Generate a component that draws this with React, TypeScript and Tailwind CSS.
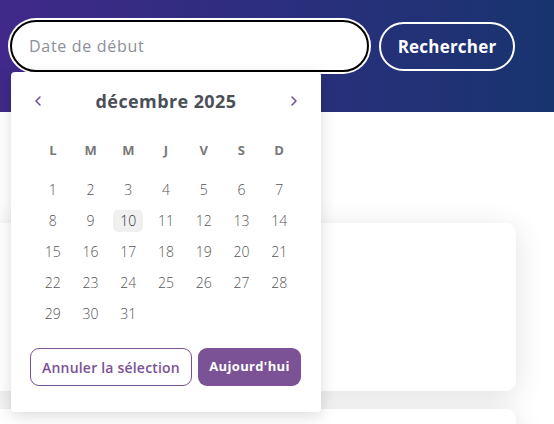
import { ChevronLeft, ChevronRight } from 'lucide-react'

const weekDays = ['L', 'M', 'M', 'J', 'V', 'S', 'D']
const days = Array.from({ length: 31 }, (_, i) => i + 1)

function DatePicker() {
  return (
    <div className="absolute left-[11px] top-[72px] z-10 w-[310px] rounded-[4px] bg-white pb-[26px] pt-[18px] shadow-[0_4px_16px_rgba(0,0,0,0.14)]">
      <div className="flex h-[22px] items-center justify-between px-[19px]">
        <ChevronLeft className="h-[16px] w-[16px] text-[#6a4a9c]" strokeWidth={2.25} />
        <span className="text-[18px] font-bold tracking-[0.4px] text-[#4b4f58]">décembre 2025</span>
        <ChevronRight className="h-[16px] w-[16px] text-[#6a4a9c]" strokeWidth={2.25} />
      </div>
      <div className="mt-[29px] grid grid-cols-7 px-[23px]">
        {weekDays.map((d, i) => (
          <span key={i} className="flex h-[20px] items-center justify-center text-[13px] font-bold text-[#787878]">
            {d}
          </span>
        ))}
      </div>
      <div className="mt-[13px] grid grid-cols-7 px-[23px]">
        {days.map((d) => (
          <div key={d} className="flex h-[31px] items-center justify-center">
            <span
              className={
                d === 10
                  ? 'flex h-[22px] w-[30px] items-center justify-center rounded-[5px] bg-[#f0f0f0] text-[14px] font-light text-[#333]'
                  : 'text-[14px] font-light text-[#555]'
              }
            >
              {d}
            </span>
          </div>
        ))}
      </div>
      <div className="mt-[19px] flex gap-[6px] px-[19px]">
        <button
          type="button"
          className="h-[38px] w-[162px] rounded-[9px] border border-[#7b5296] text-[14px] font-semibold tracking-[0.2px] text-[#7b5296]"
        >
          Annuler la sélection
        </button>
        <button
          type="button"
          className="h-[38px] w-[103px] rounded-[9px] bg-[#7b5296] text-[13px] font-bold tracking-[0.35px] text-white"
        >
          Aujourd'hui
        </button>
      </div>
    </div>
  )
}

export default function App() {
  return (
    <div className="relative h-[424px] w-[554px] overflow-hidden bg-white font-['Open_Sans',sans-serif]">
      <div className="flex h-[112px] items-start gap-[10px] bg-gradient-to-r from-[#40298a] via-[#2b2e7d] to-[#17346f] pl-[10px] pt-[20px]">
        <div className="flex h-[52px] w-[359px] items-center rounded-full border-2 border-black bg-white pl-[17px] ring-2 ring-white">
          <span className="text-[16px] tracking-[0.7px] text-[#8a8f98]">Date de début</span>
        </div>
        <button
          type="button"
          className="mt-[2px] h-[49px] w-[136px] rounded-full border-2 border-white text-[17px] font-bold tracking-[0.2px] text-white"
        >
          Rechercher
        </button>
      </div>

      <DatePicker />

      <div className="ml-[-12px] mt-[111px] flex w-[528px] flex-col gap-[18px]">
        <div className="h-[168px] rounded-[10px] bg-white shadow-[0_6px_30px_rgba(0,0,0,0.12)]" />
        <div className="h-[80px] rounded-[10px] bg-white shadow-[0_6px_30px_rgba(0,0,0,0.12)]" />
      </div>
    </div>
  )
}
